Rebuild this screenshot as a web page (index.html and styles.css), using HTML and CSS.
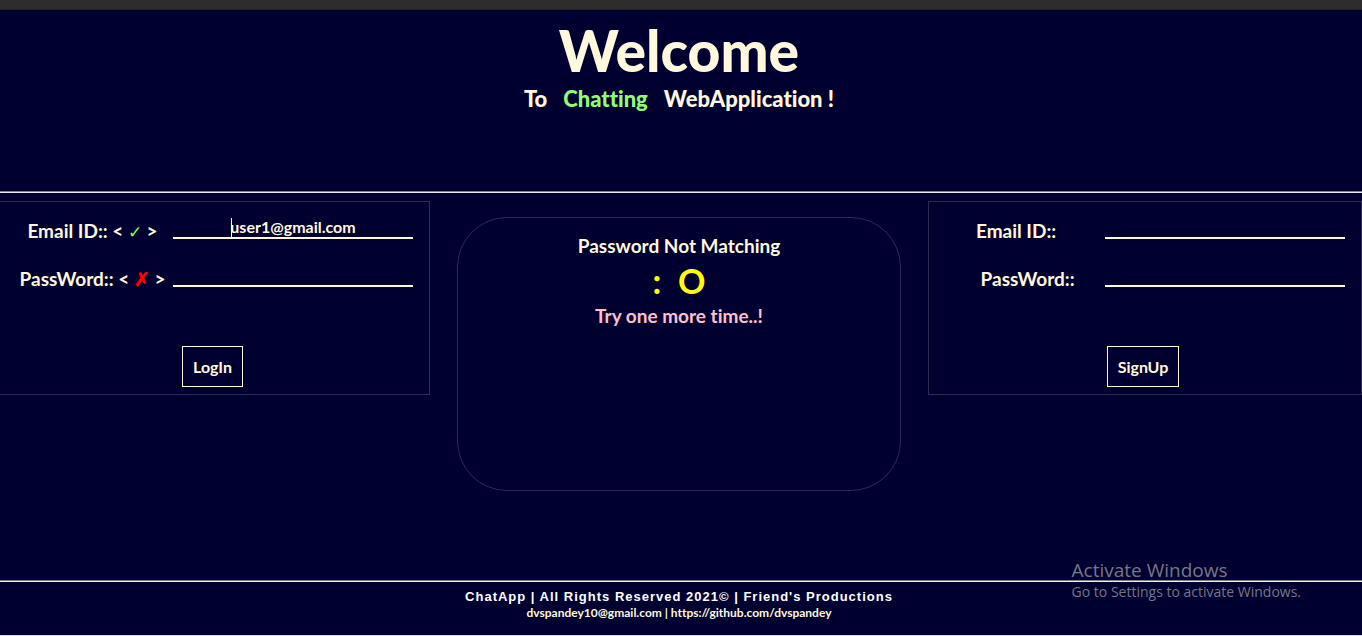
FILE: index.html
```
<!DOCTYPE html>
<html lang="en">
<head>
<meta charset="utf-8">
<title>ChatApp</title>
<link rel="stylesheet" href="styles.css">
</head>
<body>
<div class="topbar"></div>
<header class="header">
  <h1 class="title">Welcome</h1>
  <p class="subtitle"><span>To</span><span class="accent">Chatting</span><span>WebApplication !</span></p>
</header>
<main class="main">
  <form class="panel panel-login">
    <div class="row">
      <label class="label" for="login-email">Email ID:: &lt; <span class="ok">✓</span> &gt;</label>
      <div class="field"><input class="input" id="login-email" type="text" value="user1@gmail.com"><span class="caret"></span></div>
    </div>
    <div class="row">
      <label class="label" for="login-pass">PassWord:: &lt; <span class="bad">✗</span> &gt;</label>
      <div class="field"><input class="input" id="login-pass" type="password"></div>
    </div>
    <button class="button" type="button">LogIn</button>
  </form>
  <section class="message">
    <p class="message-text">Password Not Matching</p>
    <p class="face">:&nbsp; O</p>
    <p class="message-text retry">Try one more time..!</p>
  </section>
  <form class="panel">
    <div class="row">
      <label class="label" for="signup-email">Email ID::&nbsp;&nbsp;&nbsp;</label>
      <div class="field"><input class="input" id="signup-email" type="text"></div>
    </div>
    <div class="row">
      <label class="label" for="signup-pass">&nbsp;&nbsp;PassWord::</label>
      <div class="field"><input class="input" id="signup-pass" type="password"></div>
    </div>
    <button class="button" type="button">SignUp</button>
  </form>
</main>
<footer class="footer">
  <p class="rights">ChatApp | All Rights Reserved 2021© | Friend's Productions</p>
  <p class="contact">dvspandey10@gmail.com | https://github.com/dvspandey</p>
</footer>
<aside class="watermark">
  <p class="watermark-title">Activate Windows</p>
  <p class="watermark-text">Go to Settings to activate Windows.</p>
</aside>
</body>
</html>
```
FILE: styles.css
```
* { box-sizing: border-box; }
body {
  margin: 0;
  min-height: 100vh;
  display: flex;
  flex-direction: column;
  background: #000030;
  color: cornsilk;
  font-family: Lato, "Open Sans", sans-serif;
  font-weight: 700;
  font-variant-ligatures: none;
  border-bottom: 1px solid #dcdce6;
}
h1, p { margin: 0; }
.topbar { height: 10px; background: #2d2d2d; border-bottom: 1px solid #222; }
.header {
  height: 183px;
  padding: 6px 4px 0 0;
  text-align: center;
  border-bottom: 1px solid #eee;
  box-shadow: inset 0 -1px #808080;
}
.title { font-size: 57px; line-height: 68px; font-weight: 900; }
.subtitle {
  display: flex;
  justify-content: center;
  gap: 16px;
  font-size: 22px;
  line-height: 30px;
  font-weight: 900;
}
.accent { color: #90ff70; }
.main {
  flex: 1;
  display: grid;
  grid-template-columns: 430fr 444fr 434fr;
  column-gap: 27px;
  align-items: start;
  padding-top: 8px;
}
.panel {
  display: flex;
  flex-direction: column;
  border: 1px solid #2e2b52;
  padding: 13px 16px 7px 12px;
}
.panel-login { border-left: 0; }
.row { display: flex; align-items: flex-start; height: 48px; }
.label { flex: 1; text-align: center; font-size: 19px; line-height: 32px; white-space: nowrap; }
.ok { color: #80ff60; font-size: 17px; font-weight: 400; }
.bad { color: red; }
.field { position: relative; flex: none; width: 240px; }
.input {
  display: block;
  width: 100%;
  height: 24px;
  padding: 0;
  border: 0;
  border-bottom: 2px solid cornsilk;
  border-radius: 0;
  background: transparent;
  color: cornsilk;
  font: inherit;
  font-size: 16px;
  text-align: center;
  outline: 0;
}
.caret {
  position: absolute;
  left: calc(50% - 62px);
  top: 3px;
  width: 1px;
  height: 19px;
  background: #fff;
}
.button {
  align-self: center;
  margin-top: 35px;
  height: 41px;
  padding: 0 10px;
  border: 1px solid cornsilk;
  background: transparent;
  color: cornsilk;
  font: inherit;
  font-size: 16px;
}
.message {
  margin-top: 16px;
  height: 274px;
  padding-top: 16px;
  border: 1px solid #2e2b52;
  border-radius: 50px;
  text-align: center;
}
.message-text { font-size: 19px; line-height: 24px; }
.face { color: yellow; font-size: 34px; line-height: 46px; }
.retry { color: pink; }
.footer {
  height: 55px;
  padding: 8px 4px 0 0;
  border-top: 1px solid #808080;
  box-shadow: inset 0 1px #eee;
  text-align: center;
}
.rights {
  color: #fff;
  font-family: "Liberation Sans", Arial, sans-serif;
  font-size: 13px;
  line-height: 16px;
  letter-spacing: 1px;
}
.contact { font-size: 12px; line-height: 16px; }
.watermark {
  position: absolute;
  right: 61px;
  bottom: 34px;
  color: #777785;
  font-family: "Open Sans", sans-serif;
  font-weight: 400;
}
.watermark-title { font-size: 19px; line-height: 24px; }
.watermark-text { font-size: 14px; line-height: 20px; }
```
